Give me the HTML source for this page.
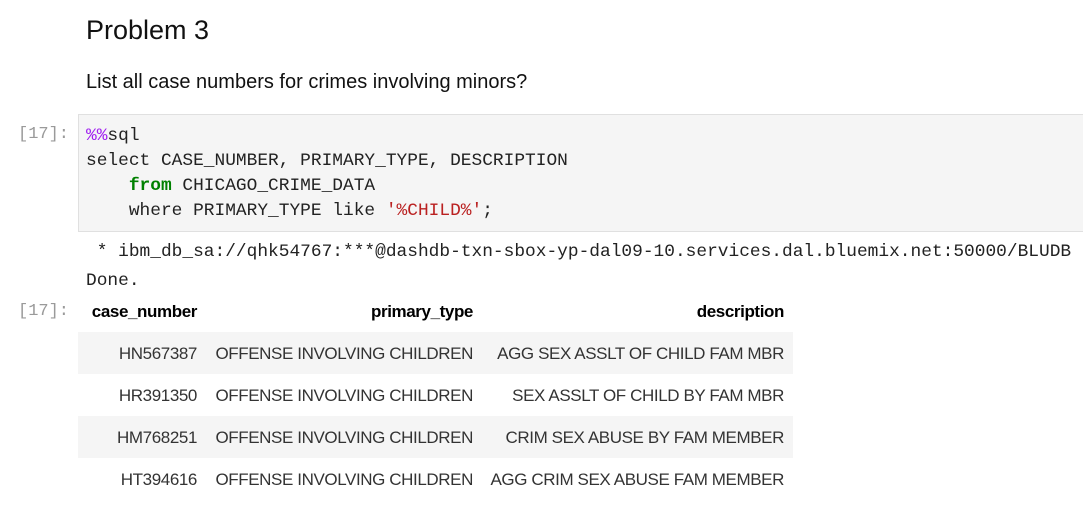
<!DOCTYPE html>
<html><head><style>
body{margin:0;width:1083px;height:508px;background:#fff;position:relative;overflow:hidden;font-family:"Liberation Sans",sans-serif;color:#1a1a1a}
.a{position:absolute;white-space:pre}
.m{font-family:"Liberation Mono",monospace;font-size:17.85px;color:#222}
.p{font-family:"Liberation Mono",monospace;font-size:17px;color:#9a9a9a}
.code{position:absolute;left:78px;top:114px;width:1010px;height:116px;background:#f5f5f5;border:1px solid #e0e0e0}
.row{position:absolute;left:78px;width:715px;height:42px}
.c{position:absolute;font-size:17px;text-align:right;white-space:nowrap;letter-spacing:-0.4px;color:#333}
.h{font-weight:bold;color:#000}
</style></head><body>
<div class="a" style="left:86px;top:15px;font-size:27px;color:#111">Problem 3</div>
<div class="a" style="left:86px;top:71px;font-size:20px;color:#111">List all case numbers for crimes involving minors?</div>
<div class="a p" style="left:18px;top:125px">[17]:</div>
<div class="code"></div>
<div class="a m" style="left:86px;top:124px;line-height:25px"><span style="color:#a020f0">%%</span>sql
select CASE_NUMBER, PRIMARY_TYPE, DESCRIPTION
    <b style="color:#008000">from</b> CHICAGO_CRIME_DATA
    where PRIMARY_TYPE like <span style="color:#ba2121">'%CHILD%'</span>;</div>
<div class="a m" style="left:86px;top:238px;line-height:29px"> * ibm_db_sa://qhk54767:***@dashdb-txn-sbox-yp-dal09-10.services.dal.bluemix.net:50000/BLUDB
Done.</div>
<div class="a p" style="left:18px;top:302px">[17]:</div>
<div class="row" style="top:290px"><span class="c h" style="right:596px;top:12px">case_number</span><span class="c h" style="right:320px;top:12px">primary_type</span><span class="c h" style="right:9px;top:12px">description</span></div>
<div class="row" style="top:332px;background:#f5f5f5"><span class="c" style="right:596px;top:12px">HN567387</span><span class="c" style="right:320px;top:12px">OFFENSE INVOLVING CHILDREN</span><span class="c" style="right:9px;top:12px">AGG SEX ASSLT OF CHILD FAM MBR</span></div>
<div class="row" style="top:374px"><span class="c" style="right:596px;top:12px">HR391350</span><span class="c" style="right:320px;top:12px">OFFENSE INVOLVING CHILDREN</span><span class="c" style="right:9px;top:12px">SEX ASSLT OF CHILD BY FAM MBR</span></div>
<div class="row" style="top:416px;background:#f5f5f5"><span class="c" style="right:596px;top:12px">HM768251</span><span class="c" style="right:320px;top:12px">OFFENSE INVOLVING CHILDREN</span><span class="c" style="right:9px;top:12px">CRIM SEX ABUSE BY FAM MEMBER</span></div>
<div class="row" style="top:458px"><span class="c" style="right:596px;top:12px">HT394616</span><span class="c" style="right:320px;top:12px">OFFENSE INVOLVING CHILDREN</span><span class="c" style="right:9px;top:12px">AGG CRIM SEX ABUSE FAM MEMBER</span></div>
</body></html>
